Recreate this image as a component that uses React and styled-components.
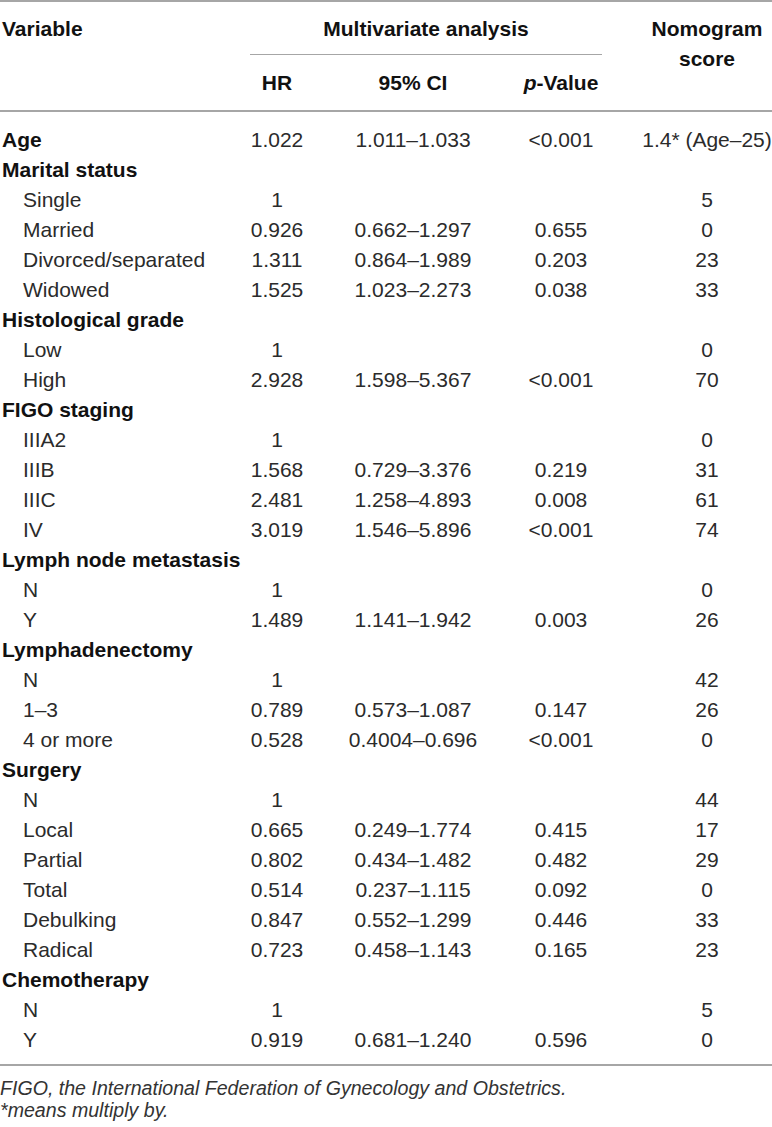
import React from 'react'
import styled, { createGlobalStyle } from 'styled-components'

const Global = createGlobalStyle`
  body {
    margin: 0;
    background: #fff;
    color: #111;
    font-family: 'Liberation Sans', Arial, sans-serif;
  }
`

const COLS = '248px 58px 214px 82px 1fr'

const rows = [
  { label: 'Age', group: true, hr: '1.022', ci: '1.011–1.033', p: '<0.001', score: '1.4* (Age–25)' },
  { label: 'Marital status', group: true },
  { label: 'Single', hr: '1', score: '5' },
  { label: 'Married', hr: '0.926', ci: '0.662–1.297', p: '0.655', score: '0' },
  { label: 'Divorced/separated', hr: '1.311', ci: '0.864–1.989', p: '0.203', score: '23' },
  { label: 'Widowed', hr: '1.525', ci: '1.023–2.273', p: '0.038', score: '33' },
  { label: 'Histological grade', group: true },
  { label: 'Low', hr: '1', score: '0' },
  { label: 'High', hr: '2.928', ci: '1.598–5.367', p: '<0.001', score: '70' },
  { label: 'FIGO staging', group: true },
  { label: 'IIIA2', hr: '1', score: '0' },
  { label: 'IIIB', hr: '1.568', ci: '0.729–3.376', p: '0.219', score: '31' },
  { label: 'IIIC', hr: '2.481', ci: '1.258–4.893', p: '0.008', score: '61' },
  { label: 'IV', hr: '3.019', ci: '1.546–5.896', p: '<0.001', score: '74' },
  { label: 'Lymph node metastasis', group: true },
  { label: 'N', hr: '1', score: '0' },
  { label: 'Y', hr: '1.489', ci: '1.141–1.942', p: '0.003', score: '26' },
  { label: 'Lymphadenectomy', group: true },
  { label: 'N', hr: '1', score: '42' },
  { label: '1–3', hr: '0.789', ci: '0.573–1.087', p: '0.147', score: '26' },
  { label: '4 or more', hr: '0.528', ci: '0.4004–0.696', p: '<0.001', score: '0' },
  { label: 'Surgery', group: true },
  { label: 'N', hr: '1', score: '44' },
  { label: 'Local', hr: '0.665', ci: '0.249–1.774', p: '0.415', score: '17' },
  { label: 'Partial', hr: '0.802', ci: '0.434–1.482', p: '0.482', score: '29' },
  { label: 'Total', hr: '0.514', ci: '0.237–1.115', p: '0.092', score: '0' },
  { label: 'Debulking', hr: '0.847', ci: '0.552–1.299', p: '0.446', score: '33' },
  { label: 'Radical', hr: '0.723', ci: '0.458–1.143', p: '0.165', score: '23' },
  { label: 'Chemotherapy', group: true },
  { label: 'N', hr: '1', score: '5' },
  { label: 'Y', hr: '0.919', ci: '0.681–1.240', p: '0.596', score: '0' },
]

export default function App() {
  return (
    <Page>
      <Global />
      <Table>
        <Head>
          <HeadCell $rows="1 / 3" $align="left">Variable</HeadCell>
          <GroupCell>Multivariate analysis</GroupCell>
          <HeadCell $rows="1 / 3" $score>Nomogram score</HeadCell>
          <SubCell>HR</SubCell>
          <SubCell>95% CI</SubCell>
          <SubCell><i>p</i>-Value</SubCell>
        </Head>
        <Body>
          {rows.map((r, i) => (
            <Row key={i}>
              <Label $group={r.group}>{r.label}</Label>
              <Value>{r.hr}</Value>
              <Value>{r.ci}</Value>
              <Value>{r.p}</Value>
              <Value $score>{r.score}</Value>
            </Row>
          ))}
        </Body>
      </Table>
      <Notes>
        <Note>FIGO, the International Federation of Gynecology and Obstetrics.</Note>
        <Note>*means multiply by.</Note>
      </Notes>
    </Page>
  )
}

const Page = styled.div`
  width: 772px;
  height: 1127px;
  overflow: hidden;
`

const Table = styled.div`
  border-top: 2px solid #a6a6a6;
  border-bottom: 2px solid #a6a6a6;
`

const Head = styled.div`
  display: grid;
  grid-template-columns: ${COLS};
  grid-template-rows: 53px 55px;
  border-bottom: 2px solid #a6a6a6;
  font-size: 21px;
  font-weight: 700;
`

const HeadCell = styled.div`
  grid-row: ${p => p.$rows};
  text-align: ${p => p.$align || 'center'};
  padding: 12px 0 0 ${p => (p.$score ? '40px' : '2px')};
  line-height: 30px;
  ${p => p.$score && 'grid-column: 5;'}
`

const GroupCell = styled.div`
  grid-column: 2 / 5;
  grid-row: 1;
  margin-left: 2px;
  text-align: center;
  line-height: 30px;
  padding-top: 12px;
  border-bottom: 1px solid #a6a6a6;
`

const SubCell = styled.div`
  grid-row: 2;
  text-align: center;
  line-height: 30px;
  padding-top: 13px;
`

const Body = styled.div`
  padding: 13px 0 9px;
`

const Row = styled.div`
  display: grid;
  grid-template-columns: ${COLS};
  height: 30px;
  align-items: center;
  font-size: 21px;
  line-height: 30px;
  color: #2b2b2b;
`

const Label = styled.div`
  padding-left: ${p => (p.$group ? '2px' : '23px')};
  font-weight: ${p => (p.$group ? 700 : 400)};
  color: ${p => (p.$group ? '#111' : 'inherit')};
  white-space: nowrap;
`

const Value = styled.div`
  text-align: center;
  white-space: nowrap;
  padding-left: ${p => (p.$score ? '40px' : '0')};
`

const Notes = styled.div`
  padding: 11px 0 0 0;
`

const Note = styled.div`
  font-style: italic;
  font-size: 19.6px;
  line-height: 22px;
  color: #333;
  white-space: nowrap;
`
